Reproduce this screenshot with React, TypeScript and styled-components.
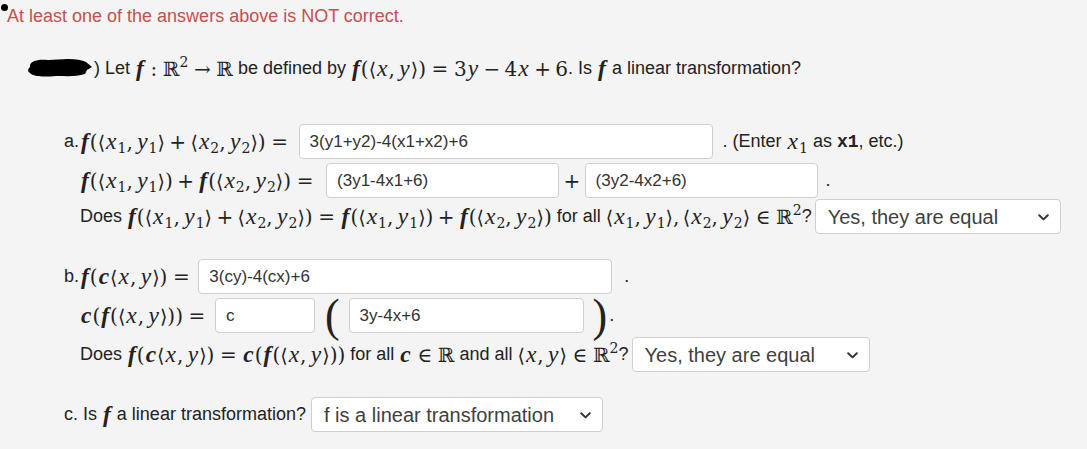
import React from "react";
import styled, { createGlobalStyle } from "styled-components";

const Global = createGlobalStyle`
  html, body { margin: 0; padding: 0; background: #f4f4f4; }
  body {
    font-family: "Liberation Sans", Arial, sans-serif;
    font-size: 18px;
    color: #222;
  }
`;

const Page = styled.div`
  width: 1087px;
  min-height: 449px;
  background: #f4f4f4;
  padding-top: 6px;
  box-sizing: border-box;
`;

const ErrorLine = styled.div`
  position: relative;
  padding-left: 7px;
  line-height: 20px;
  font-size: 18px;
  color: #c45050;
`;

const Bullet = styled.span`
  position: absolute;
  left: 1px;
  top: -2px;
  width: 7px;
  height: 7px;
  border-radius: 50%;
  background: #000;
`;

const QuestionLine = styled.div`
  margin-top: 30px;
  padding-left: 26px;
  display: flex;
  align-items: center;
  height: 24px;
  white-space: pre;
`;

const Part = styled.div<{ $mt: number }>`
  margin-top: ${(p) => p.$mt}px;
  padding-left: 64px;
`;

const Row = styled.div<{ $mt?: number; $indent?: number }>`
  display: flex;
  align-items: center;
  height: 35px;
  margin-top: ${(p) => p.$mt ?? 0}px;
  padding-left: ${(p) => p.$indent ?? 0}px;
  white-space: pre;
`;

const Label = styled.span`
  width: 16px;
  flex: none;
`;

const Txt = styled.span<{ $ml?: number; $mr?: number }>`
  white-space: pre;
  margin-left: ${(p) => p.$ml ?? 0}px;
  margin-right: ${(p) => p.$mr ?? 0}px;
`;

const Field = styled.input<{ $w: number; $ml?: number }>`
  box-sizing: border-box;
  width: ${(p) => p.$w}px;
  height: 35px;
  margin-left: ${(p) => p.$ml ?? 0}px;
  padding: 0 10px;
  border: 1px solid #cfcfcf;
  border-radius: 4px;
  background: #fff;
  font-family: "Liberation Sans", Arial, sans-serif;
  font-size: 17px;
  color: #333;
  outline: none;
  flex: none;
`;

const SelectWrap = styled.span<{ $ml?: number }>`
  position: relative;
  display: inline-flex;
  margin-left: ${(p) => p.$ml ?? 0}px;
  flex: none;
`;

const Select = styled.select<{ $w: number }>`
  appearance: none;
  -webkit-appearance: none;
  box-sizing: border-box;
  width: ${(p) => p.$w}px;
  height: 35px;
  padding: 0 30px 0 12px;
  border: 1px solid #cfcfcf;
  border-radius: 4px;
  background: #fff;
  font-family: "Liberation Sans", Arial, sans-serif;
  font-size: 20px;
  color: #3f3f3f;
  outline: none;
`;

const Chevron = styled.svg`
  position: absolute;
  right: 12px;
  top: 50%;
  margin-top: -3px;
  pointer-events: none;
`;

const MathWrap = styled.span`
  display: inline-flex;
  align-items: baseline;
  white-space: nowrap;
`;

const Var = styled.span<{ $bold?: boolean }>`
  font-family: "Liberation Serif", serif;
  font-style: italic;
  font-size: 23.5px;
  font-weight: ${(p) => (p.$bold ? 700 : 400)};
  padding: 0 1px;
`;

const Up = styled.span`
  font-family: "DejaVu Serif", serif;
  font-size: 20px;
`;

const Bracket = styled(Up)`
  font-size: 19px;
`;

const Op = styled(Up)`
  margin: 0 0.22em;
`;

const Rel = styled(Up)`
  margin: 0 0.28em;
`;

const Comma = styled(Up)`
  margin-right: 0.17em;
`;

const Sub = styled.span`
  font-family: "DejaVu Serif", serif;
  font-size: 14px;
  position: relative;
  top: 4px;
`;

const Sup = styled.span`
  font-family: "DejaVu Serif", serif;
  font-size: 14px;
  position: relative;
  top: -9px;
`;

const Mono = styled.span`
  font-family: "Liberation Mono", monospace;
  font-weight: 700;
  font-size: 18px;
`;

const BigParen = styled.span<{ $ml?: number; $mr?: number }>`
  font-family: "Liberation Serif", serif;
  font-size: 44px;
  line-height: 35px;
  display: inline-block;
  transform: scaleY(1.05);
  margin-left: ${(p) => p.$ml ?? 0}px;
  margin-right: ${(p) => p.$mr ?? 0}px;
`;

function M({ t }: { t: string }) {
  const out: React.ReactNode[] = [];
  for (let i = 0; i < t.length; i++) {
    const ch = t[i];
    if (ch === "_") {
      i++;
      out.push(<Sub key={i}>{t[i]}</Sub>);
      continue;
    }
    if (ch === "^") {
      i++;
      out.push(<Sup key={i}>{t[i]}</Sup>);
      continue;
    }
    if (ch === " ") continue;
    if (/[a-z]/.test(ch)) out.push(<Var key={i} $bold={ch === "f" || ch === "c"}>{ch}</Var>);
    else if ("+−".includes(ch)) out.push(<Op key={i}>{ch}</Op>);
    else if ("=→∈:".includes(ch)) out.push(<Rel key={i}>{ch}</Rel>);
    else if (ch === ",") out.push(<Comma key={i}>,</Comma>);
    else if (ch === "⟨" || ch === "⟩") out.push(<Bracket key={i}>{ch}</Bracket>);
    else out.push(<Up key={i}>{ch}</Up>);
  }
  return <MathWrap>{out}</MathWrap>;
}

function Dropdown({ w, ml, value }: { w: number; ml?: number; value: string }) {
  return (
    <SelectWrap $ml={ml}>
      <Select $w={w} defaultValue={value}>
        <option value="?">?</option>
        <option value={value}>{value}</option>
      </Select>
      <Chevron width="11" height="7" viewBox="0 0 11 7">
        <path d="M1.2 1.2 L5.5 5.4 L9.8 1.2" fill="none" stroke="#333" strokeWidth="2" strokeLinecap="round" strokeLinejoin="round" />
      </Chevron>
    </SelectWrap>
  );
}

const Redaction = () => (
  <svg width="68" height="22" viewBox="0 0 68 22" style={{ flex: "none" }}>
    <path
      d="M4 10 C3 4, 12 2, 22 3 L42 2 C50 2, 56 3, 60 5 L66 10 L61 13 L59 17 C50 20, 40 19, 30 19 C18 20, 8 20, 4 16 C1 14, 2 12, 4 10 Z"
      fill="#000"
    />
  </svg>
);

export default function App() {
  return (
    <>
      <Global />
      <Page>
        <ErrorLine>
          <Bullet />
          At least one of the answers above is NOT correct.
        </ErrorLine>

        <QuestionLine>
          <Redaction />
          <Txt>) Let </Txt>
          <M t="f : ℝ^2 → ℝ" />
          <Txt> be defined by </Txt>
          <M t="f(⟨x,y⟩) = 3y − 4x + 6" />
          <Txt>. Is </Txt>
          <M t="f" />
          <Txt> a linear transformation?</Txt>
        </QuestionLine>

        <Part $mt={44}>
          <Row>
            <Label>a.</Label>
            <M t="f(⟨x_1,y_1⟩ + ⟨x_2,y_2⟩) =" />
            <Field $w={414} $ml={5} readOnly defaultValue="3(y1+y2)-4(x1+x2)+6" />
            <Txt $ml={10}>. (Enter </Txt>
            <M t="x_1" />
            <Txt> as </Txt>
            <Mono>x1</Mono>
            <Txt>, etc.)</Txt>
          </Row>
          <Row $mt={4} $indent={16}>
            <M t="f(⟨x_1,y_1⟩) + f(⟨x_2,y_2⟩) =" />
            <Field $w={233} $ml={7} readOnly defaultValue="(3y1-4x1+6)" />
            <Op>+</Op>
            <Field $w={233} readOnly defaultValue="(3y2-4x2+6)" />
            <Txt $ml={8}>.</Txt>
          </Row>
          <Row $mt={1} $indent={16}>
            <Txt>Does </Txt>
            <M t="f(⟨x_1,y_1⟩ + ⟨x_2,y_2⟩) = f(⟨x_1,y_1⟩) + f(⟨x_2,y_2⟩)" />
            <Txt> for all </Txt>
            <M t="⟨x_1,y_1⟩,⟨x_2,y_2⟩ ∈ ℝ^2" />
            <Txt>?</Txt>
            <Dropdown w={246} ml={3} value="Yes, they are equal" />
          </Row>
        </Part>

        <Part $mt={25}>
          <Row $mt={0}>
            <Label>b.</Label>
            <M t="f(c⟨x,y⟩) =" />
            <Field $w={414} $ml={3} readOnly defaultValue="3(cy)-4(cx)+6" />
            <Txt $ml={12}>.</Txt>
          </Row>
          <Row $mt={4} $indent={16}>
            <M t="c(f(⟨x,y⟩)) =" />
            <Field $w={100} $ml={4} readOnly defaultValue="c" />
            <BigParen $ml={10} $mr={9}>(</BigParen>
            <Field $w={235} readOnly defaultValue="3y-4x+6" />
            <BigParen $ml={9}>)</BigParen>
            <Txt $ml={2}>.</Txt>
          </Row>
          <Row $mt={4} $indent={16}>
            <Txt>Does </Txt>
            <M t="f(c⟨x,y⟩) = c(f(⟨x,y⟩))" />
            <Txt> for all </Txt>
            <M t="c ∈ ℝ" />
            <Txt> and all </Txt>
            <M t="⟨x,y⟩ ∈ ℝ^2" />
            <Txt>?</Txt>
            <Dropdown w={238} ml={3} value="Yes, they are equal" />
          </Row>
        </Part>

        <Part $mt={25}>
          <Row>
            <Txt>c. Is </Txt>
            <M t="f" />
            <Txt> a linear transformation?</Txt>
            <Dropdown w={292} ml={5} value="f is a linear transformation" />
          </Row>
        </Part>
      </Page>
    </>
  );
}
